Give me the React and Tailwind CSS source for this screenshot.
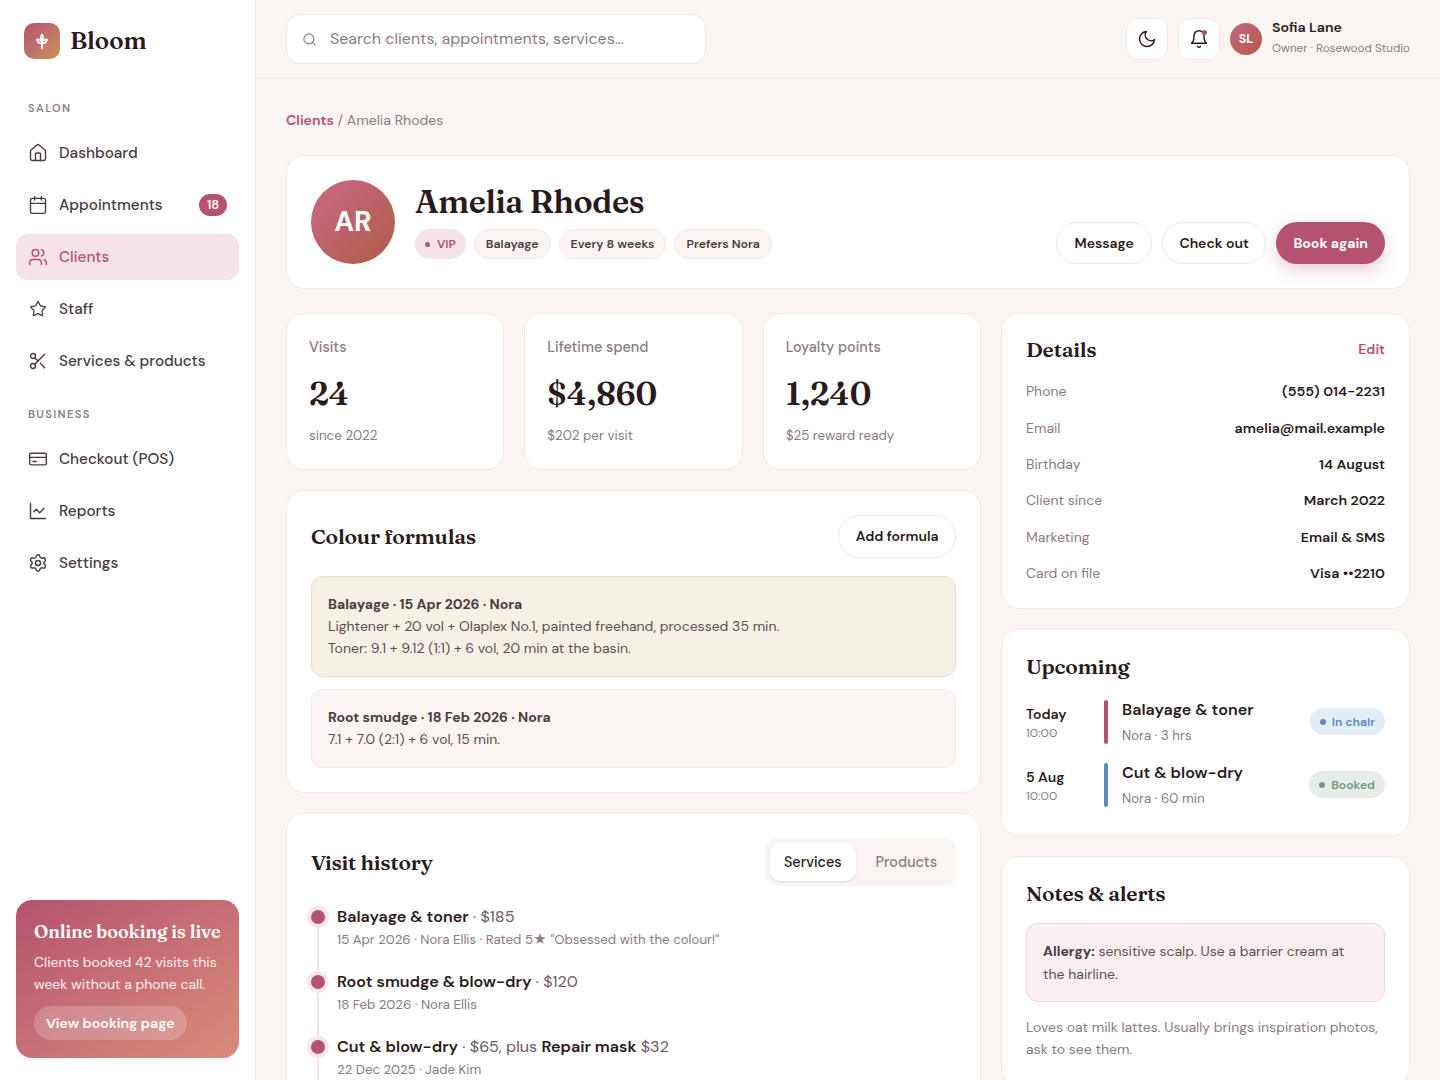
import { Calendar, House, Scissors, Search, Settings, Star, Users } from "lucide-react";

const sans = "font-['DM_Sans','Inter','Liberation_Sans',sans-serif]";
const serif = "font-['Fraunces','Liberation_Serif',serif]";

function ChartIcon(props) {
  return (
    <svg width="20" height="20" viewBox="0 0 24 24" fill="none" stroke="currentColor" strokeWidth="1.75" strokeLinecap="round" strokeLinejoin="round" {...props}>
      <path d="M3 3v18h18" />
      <path d="m19 9-5 5-4-4-3 3" />
    </svg>
  );
}

function CardIcon(props) {
  return (
    <svg width="20" height="20" viewBox="0 0 24 24" fill="none" stroke="currentColor" strokeWidth="1.75" strokeLinecap="round" strokeLinejoin="round" {...props}>
      <rect x="2" y="5" width="20" height="14" rx="2" />
      <path d="M2 10h20" />
      <path d="M6 15h4" />
    </svg>
  );
}

const salonNav = [
  { label: "Dashboard", icon: House },
  { label: "Appointments", icon: Calendar, badge: "18" },
  { label: "Clients", icon: Users, active: true },
  { label: "Staff", icon: Star, iconClass: "scale-[0.88]" },
  { label: "Services & products", icon: Scissors },
];

const businessNav = [
  { label: "Checkout (POS)", icon: CardIcon },
  { label: "Reports", icon: ChartIcon },
  { label: "Settings", icon: Settings },
];

function NavItem({ item }) {
  const Icon = item.icon;
  return (
    <a
      className={
        item.active
          ? "flex h-[46px] items-center gap-[11px] rounded-xl bg-[#f6e3e8] px-3 text-[15.3px] font-medium text-[#b5526f]"
          : "flex h-[46px] items-center gap-[11px] rounded-xl px-3 text-[15.3px] font-medium text-[#4a3b40]"
      }
    >
      <Icon size={20} strokeWidth={1.7} className={item.iconClass} />
      <span className="flex-1">{item.label}</span>
      {item.badge && (
        <span className="flex h-[22px] w-7 items-center justify-center rounded-full bg-[#b5526f] text-[12.5px] font-semibold text-white">
          {item.badge}
        </span>
      )}
    </a>
  );
}

function Sidebar() {
  return (
    <aside className="flex w-[256px] shrink-0 flex-col border-r border-[#f1e9e6] bg-white px-4 pb-[22px] pt-[23px]">
      <div className="flex items-center gap-[10px] px-2">
        <div className="flex h-9 w-9 items-center justify-center rounded-[10px] bg-gradient-to-br from-[#b5526f] to-[#c8925a]">
          <svg width="20" height="20" viewBox="0 0 24 24" fill="none" stroke="white" strokeWidth="2" strokeLinecap="round" strokeLinejoin="round">
            <path d="M12 21v-7" />
            <path d="M12 11c-1.800-1.800-1.800-4.700 0-7 1.800 2.300 1.800 5.200 0 7Z" />
            <path d="M12 15c-3.600 0-6-2-6-5 2.600 0 4.800 1 6 3" />
            <path d="M12 15c3.600 0 6-2 6-5-2.600 0-4.800 1-6 3" />
          </svg>
        </div>
        <span className={`${serif} text-[24px] font-semibold leading-none text-[#2a1a20]`}>Bloom</span>
      </div>
      <p className="mb-[14px] mt-[41px] px-3 text-[11.2px] font-semibold leading-[16px] tracking-[0.12em] text-[#8f8084]">SALON</p>
      <nav className="flex flex-col gap-[6px]">
        {salonNav.map((item) => (
          <NavItem key={item.label} item={item} />
        ))}
      </nav>
      <p className="mb-[14px] mt-[22px] px-3 text-[11.2px] font-semibold leading-[16px] tracking-[0.12em] text-[#8f8084]">BUSINESS</p>
      <nav className="flex flex-col gap-[6px]">
        {businessNav.map((item) => (
          <NavItem key={item.label} item={item} />
        ))}
      </nav>
      <div className="mt-auto rounded-2xl bg-gradient-to-br from-[#b5526f] to-[#d98c7a] p-[18px] text-white">
        <p className={`${serif} whitespace-nowrap text-[17.9px] font-semibold leading-[28px]`}>Online booking is live</p>
        <p className="mt-[5px] text-[14px] leading-[22px] text-white/90">Clients booked 42 visits this week without a phone call.</p>
        <button className="mt-[11px] h-[34px] rounded-full bg-white/20 px-3 pt-[1px] text-[14.2px] font-semibold">View booking page</button>
      </div>
    </aside>
  );
}

function Topbar() {
  return (
    <header className="flex h-[79px] shrink-0 items-center justify-between border-b border-[#f1e9e6] px-[30px]">
      <div className="flex h-[50px] w-[420px] items-center gap-[13px] rounded-[14px] border border-[#f1e9e6] bg-white px-[15px] text-base text-[#8a7b7f]">
        <Search size={15} strokeWidth={1.75} />
        <span>Search clients, appointments, services…</span>
      </div>
      <div className="flex items-center gap-[10px]">
        <button className="flex h-[42px] w-[42px] items-center justify-center rounded-xl border border-[#f1e9e6] bg-white text-[#2a1a20]">
          <svg width="20" height="20" viewBox="0 0 24 24" fill="none" stroke="currentColor" strokeWidth="1.75" strokeLinecap="round" strokeLinejoin="round">
            <path d="M21 12.790A9 9 0 1 1 11.210 3 7 7 0 0 0 21 12.790Z" />
          </svg>
        </button>
        <button className="relative flex h-[42px] w-[42px] items-center justify-center rounded-xl border border-[#f1e9e6] bg-white text-[#2a1a20]">
          <svg width="20" height="20" viewBox="0 0 24 24" fill="none" stroke="currentColor" strokeWidth="1.75" strokeLinecap="round" strokeLinejoin="round">
            <path d="M6 8a6 6 0 0 1 12 0c0 7 3 9 3 9H3s3-2 3-9" />
            <path d="M10.300 21a1.940 1.940 0 0 0 3.400 0" />
          </svg>
          <span className="absolute right-[12px] top-[11px] h-[5px] w-[5px] rounded-full bg-[#b5526f]" />
        </button>
        <div className="flex h-8 w-8 items-center justify-center rounded-full bg-gradient-to-br from-[#c9667f] to-[#b05a4c] text-[12.5px] font-bold text-white">SL</div>
        <div className="mb-[5px]">
          <p className="text-[14.2px] font-semibold leading-[22px] text-[#2a1a20]">Sofia Lane</p>
          <p className="text-[11.7px] leading-[20px] text-[#8a7b7f]">Owner · Rosewood Studio</p>
        </div>
      </div>
    </header>
  );
}

function Chip({ children }) {
  return (
    <span className="flex h-[30px] items-center rounded-full border border-[#f1e9e6] bg-[#faf5f3] px-[11px] text-[12.3px] font-semibold text-[#4a3b40]">{children}</span>
  );
}

function OutlineButton({ children, className }) {
  return (
    <button className={`rounded-full border border-[#f1e9e6] bg-white text-sm font-semibold text-[#2a1a20] ${className}`}>{children}</button>
  );
}

function Hero() {
  return (
    <section className="flex items-end gap-[20px] rounded-[18px] border border-[#f1e9e6] bg-white p-6">
      <div className="flex h-[84px] w-[84px] items-center justify-center rounded-full bg-gradient-to-br from-[#cc6a85] to-[#ad5a48] pb-[1px] text-[28px] font-bold text-white">AR</div>
      <div className="mb-[5px] flex-1">
        <h1 className={`${serif} text-[32px] font-semibold leading-[44px] tracking-[-0.012em] text-[#2a1a20]`}>Amelia Rhodes</h1>
        <div className="mt-[5px] flex gap-2">
          <span className="flex h-[30px] items-center gap-[7px] rounded-full bg-[#f6e3e8] px-[10px] text-xs font-semibold text-[#b5526f]">
            <span className="h-[5px] w-[5px] rounded-full bg-[#b5526f]" />
            VIP
          </span>
          <Chip>Balayage</Chip>
          <Chip>Every 8 weeks</Chip>
          <Chip>Prefers Nora</Chip>
        </div>
      </div>
      <div className="flex gap-[10.6px]">
        <OutlineButton className="h-[42px] px-[17px]">Message</OutlineButton>
        <OutlineButton className="h-[42px] px-4">Check out</OutlineButton>
        <button className="h-[42px] rounded-full bg-[#b5526f] px-[17px] text-sm font-bold text-white shadow-[0_6px_16px_rgba(181,82,111,0.28)]">Book again</button>
      </div>
    </section>
  );
}

function Stat({ label, value, sub }) {
  return (
    <div className="rounded-[18px] border border-[#f1e9e6] bg-white px-[22px] pb-[22px] pt-[22px]">
      <p className="text-[14.4px] font-medium leading-[22px] text-[#8a7b7f]">{label}</p>
      <p className={`${serif} mt-[14px] text-[32px] font-semibold leading-[44px] text-[#2a1a20]`}>{value}</p>
      <p className="mt-[9px] text-[13.4px] leading-[22px] text-[#8a7b7f]">{sub}</p>
    </div>
  );
}

function Formulas() {
  return (
    <section className="rounded-[18px] border border-[#f1e9e6] bg-white p-6">
      <div className="mb-[18px] flex items-center justify-between">
        <h2 className={`${serif} -mt-[2px] text-[21px] font-semibold leading-[34px] tracking-[-0.01em] text-[#2a1a20]`}>Colour formulas</h2>
        <OutlineButton className="h-[43px] px-[16.5px] pb-[1px]">Add formula</OutlineButton>
      </div>
      <div className="rounded-xl border border-[#e9dfca] bg-[#f6f1e7] px-4 pb-[16.4px] pt-4 text-sm leading-[22.4px] text-[#5c4f52]">
        <p className="font-bold leading-[22px] text-[#4a3b40]">Balayage · 15 Apr 2026 · Nora</p>
        <p>Lightener + 20 vol + Olaplex No.1, painted freehand, processed 35 min.</p>
        <p>Toner: 9.1 + 9.12 (1:1) + 6 vol, 20 min at the basin.</p>
      </div>
      <div className="mt-3 rounded-xl border border-[#f1e9e6] bg-[#faf5f3] px-4 pb-[16.4px] pt-4 text-sm leading-[22.4px] text-[#5c4f52]">
        <p className="font-bold leading-[22px] text-[#4a3b40]">Root smudge · 18 Feb 2026 · Nora</p>
        <p>7.1 + 7.0 (2:1) + 6 vol, 15 min.</p>
      </div>
    </section>
  );
}

function TimelineRow({ title, sub }) {
  return (
    <div className="relative pb-[19px] pl-[26px]">
      <span className="absolute left-[6px] top-[13px] h-[65px] w-[2px] bg-[#f6e3e8]" />
      <span className="absolute left-[-4px] top-[2px] h-[22px] w-[22px] rounded-full border-[4px] border-[#f9e6ea] bg-[#b5526f]" />
      <p className="text-[16.15px] leading-[26px] text-[#6b5c60]">{title}</p>
      <p className="-mt-[1px] text-[13.25px] leading-[21px] text-[#8a7b7f]">{sub}</p>
    </div>
  );
}

function VisitHistory() {
  return (
    <section className="rounded-[18px] border border-[#f1e9e6] bg-white p-6">
      <div className="mb-[18px] flex items-center justify-between">
        <h2 className={`${serif} text-[21px] font-semibold leading-[34px] tracking-[-0.01em] text-[#2a1a20]`}>Visit history</h2>
        <div className="flex gap-[6px] rounded-xl bg-[#faf5f3] p-[5px] text-[14.4px] font-medium">
          <span className="flex h-[38px] items-center rounded-[10px] bg-white px-[14px] pt-[1px] text-[#2a1a20] shadow-sm">Services</span>
          <span className="flex h-[38px] items-center px-[14px] pt-[1px] text-[#8a7b7f]">Products</span>
        </div>
      </div>
      <TimelineRow
        title={<><b className="font-semibold text-[#2a1a20]">Balayage &amp; toner</b> · $185</>}
        sub={'15 Apr 2026 · Nora Ellis · Rated 5★ "Obsessed with the colour!"'}
      />
      <TimelineRow
        title={<><b className="font-semibold text-[#2a1a20]">Root smudge &amp; blow-dry</b> · $120</>}
        sub="18 Feb 2026 · Nora Ellis"
      />
      <TimelineRow
        title={<><b className="font-semibold text-[#2a1a20]">Cut &amp; blow-dry</b> · $65, plus <b className="font-semibold text-[#2a1a20]">Repair mask</b> $32</>}
        sub="22 Dec 2025 · Jade Kim"
      />
    </section>
  );
}

const details = [
  ["Phone", "(555) 014-2231"],
  ["Email", "amelia@mail.example"],
  ["Birthday", "14 August"],
  ["Client since", "March 2022"],
  ["Marketing", "Email & SMS"],
  ["Card on file", "Visa ••2210"],
];

function Details() {
  return (
    <section className="rounded-[18px] border border-[#f1e9e6] bg-white px-6 pb-[16.8px] pt-[18px]">
      <div className="mb-[7.2px] flex items-center justify-between">
        <h2 className={`${serif} text-[21px] font-semibold leading-[34px] tracking-[-0.01em] text-[#2a1a20]`}>Details</h2>
        <a className="text-[14px] font-semibold text-[#b5526f]">Edit</a>
      </div>
      {details.map(([k, v]) => (
        <div key={k} className="flex justify-between py-[7px] text-sm leading-[22.4px]">
          <span className="text-[#8a7b7f]">{k}</span>
          <span className="text-[14.25px] font-semibold text-[#2a1a20]">{v}</span>
        </div>
      ))}
    </section>
  );
}

function Appt({ date, title, sub, bar, chip }) {
  return (
    <div className="flex h-[49px] items-center">
      <div className="mt-[2px] w-[78px]">
        <p className="text-sm font-semibold leading-[22px] text-[#2a1a20]">{date}</p>
        <p className="text-[12.2px] leading-[17px] text-[#8a7b7f]">10:00</p>
      </div>
      <span className={`h-[44px] w-1 rounded-full ${bar}`} />
      <div className="ml-[14px] flex-1">
        <p className="text-[16.15px] font-semibold leading-[26px] text-[#2a1a20]">{title}</p>
        <p className="mt-[2px] text-[13.3px] leading-[21px] text-[#8a7b7f]">{sub}</p>
      </div>
      {chip}
    </div>
  );
}

function Upcoming() {
  return (
    <section className="rounded-[18px] border border-[#f1e9e6] bg-white px-6 pb-[26px] pt-[19px]">
      <h2 className={`${serif} mb-[14px] text-[21px] font-semibold leading-[34px] tracking-[-0.01em] text-[#2a1a20]`}>Upcoming</h2>
      <div className="flex flex-col gap-[14px]">
        <Appt
          date="Today"
          title="Balayage & toner"
          sub="Nora · 3 hrs"
          bar="bg-[#b5526f]"
          chip={
            <span className="flex h-[27px] items-center gap-[6px] rounded-full bg-[#e4ecf6] px-[10px] text-[12.2px] font-semibold text-[#5b8abf]">
              <span className="h-[6px] w-[6px] rounded-full bg-[#5b8abf]" />
              In chair
            </span>
          }
        />
        <Appt
          date="5 Aug"
          title="Cut & blow-dry"
          sub="Nora · 60 min"
          bar="bg-[#5b8abf]"
          chip={
            <span className="flex h-[27px] items-center gap-[6px] rounded-full bg-[#e6ede8] px-[10px] text-[12.2px] font-semibold text-[#6f9a80]">
              <span className="h-[6px] w-[6px] rounded-full bg-[#6f9a80]" />
              Booked
            </span>
          }
        />
      </div>
    </section>
  );
}

function Notes() {
  return (
    <section className="rounded-[18px] border border-[#f1e9e6] bg-white px-6 pb-6 pt-[19px]">
      <h2 className={`${serif} mb-[13px] text-[21px] font-semibold leading-[34px] tracking-[-0.01em] text-[#2a1a20]`}>Notes &amp; alerts</h2>
      <div className="rounded-xl border border-[#f0d5dc] bg-[#faf0f2] p-4 text-sm leading-[22.4px] text-[#5c4f52]">
        <b className="font-bold text-[#4a3b40]">Allergy:</b> sensitive scalp. Use a barrier cream at the hairline.
      </div>
      <p className="mt-[13.600px] text-sm leading-[22.4px] text-[#8a7b7f]">Loves oat milk lattes. Usually brings inspiration photos, ask to see them.</p>
    </section>
  );
}

export default function App() {
  return (
    <div className={`${sans} flex h-screen overflow-hidden bg-[#faf5f3]`}>
      <Sidebar />
      <div className="flex min-w-0 flex-1 flex-col">
        <Topbar />
        <main className="flex-1 overflow-hidden px-[30px] pt-[30px]">
          <p className="mb-[24px] text-[14.1px] leading-[22px] text-[#8a7b7f]">
            <a className="font-semibold text-[#b5526f]">Clients</a> / Amelia Rhodes
          </p>
          <Hero />
          <div className="mt-6 grid grid-cols-[695px_409px] gap-5">
            <div className="flex flex-col gap-5">
              <div className="grid grid-cols-3 gap-5">
                <Stat label="Visits" value="24" sub="since 2022" />
                <Stat label="Lifetime spend" value="$4,860" sub="$202 per visit" />
                <Stat label="Loyalty points" value="1,240" sub="$25 reward ready" />
              </div>
              <Formulas />
              <VisitHistory />
            </div>
            <div className="flex flex-col gap-5">
              <Details />
              <Upcoming />
              <Notes />
            </div>
          </div>
        </main>
      </div>
    </div>
  );
}
